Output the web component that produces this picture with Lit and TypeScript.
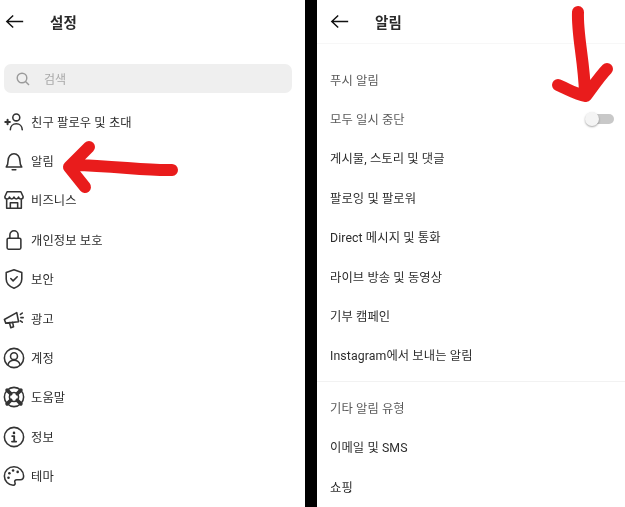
import { LitElement, html, css, svg } from "lit";
import { customElement } from "lit/decorators.js";

const back = html`<svg class="back" viewBox="0 0 22 16"><path d="M20 8H2M9 1.500 2 8l7 6.500"/></svg>`;

const icons: Record<string, unknown> = {
  invite: svg`<path d="M2.500 12h5M5 9.500v5" stroke-width="2.200"/><circle cx="14.500" cy="7" r="3.800"/><path d="M8 20.500c0-4 2.800-6.500 6.500-6.500s6.500 2.500 6.500 6.500"/>`,
  bell: svg`<path d="M3.500 18.500c1.500-1.500 2-3 2-6.500 0-4.500 2.800-8 6.500-8s6.500 3.500 6.500 8c0 3.500.5 5 2 6.500zM10 21.500h4"/>`,
  shop: svg`<path d="M4.500 3h15L22 8.500c0 3.200-4.300 3.200-5 .3-.8 2.700-4.200 2.700-5 0-.8 2.700-4.200 2.700-5 0-.7 2.900-5 2.900-5-.3zM4 12v9h16v-9M8 21v-6h8v6"/>`,
  lock: svg`<rect x="4.500" y="10" width="15" height="12" rx="1.500"/><path d="M7.500 10V6.500a4.500 4.500 0 0 1 9 0V10"/>`,
  shield: svg`<path d="M12 2 20.500 4.800v7.200c0 5-3.500 8.200-8.500 10C7 20.200 3.500 17 3.500 12V4.800z"/><path d="m8.500 11.500 2.500 2.500 4.500-4.500"/>`,
  ad: svg`<path d="M1.500 12.500 15 5l2 10-14 1.500zM7 16l1.500 5.500 3-1-1-5M19 7l2-1.500M19.500 10.500h2.500M19 14l2 1.500"/>`,
  account: svg`<circle cx="12" cy="12" r="10.500"/><circle cx="12" cy="10" r="3.800"/><path d="M5.500 19c1-3.500 3.800-4.500 6.500-4.500s5.500 1 6.500 4.500"/>`,
  help: svg`<circle cx="12" cy="12" r="10.500"/><circle cx="12" cy="12" r="5"/><path d="m4.500 4.500 4 4M19.500 4.500l-4 4M4.500 19.500l4-4M19.500 19.500l-4-4" stroke-width="4"/>`,
  info: svg`<circle cx="12" cy="12" r="10.500"/><path d="M10 11h2.200v6M9.800 17h4.600" stroke-width="2"/><circle cx="12" cy="7.500" r="1.400" fill="currentColor" stroke="none"/>`,
  theme: svg`<path d="M12 2C6 2 1.500 6.500 1.500 12s4.500 10 9.500 10c2.500 0 2.500-2 2-3-.7-1.500.3-3 2-3h4c2.500 0 3.500-1.500 3.500-4C22.500 6.500 17.500 2 12 2z"/><g fill="currentColor" stroke="none"><circle cx="7" cy="9" r="1.400"/><circle cx="11" cy="6" r="1.400"/><circle cx="16" cy="7.500" r="1.400"/><circle cx="6" cy="14" r="1.400"/></g>`,
};

const settings: [string, string][] = [
  ["invite", "친구 팔로우 및 초대"],
  ["bell", "알림"],
  ["shop", "비즈니스"],
  ["lock", "개인정보 보호"],
  ["shield", "보안"],
  ["ad", "광고"],
  ["account", "계정"],
  ["help", "도움말"],
  ["info", "정보"],
  ["theme", "테마"],
];

const firstGroup = ["게시물, 스토리 및 댓글", "팔로잉 및 팔로워", "Direct 메시지 및 통화", "라이브 방송 및 동영상", "기부 캠페인", "Instagram에서 보내는 알림"];
const secondGroup = ["이메일 및 SMS", "쇼핑"];

@customElement("app-root")
export class AppRoot extends LitElement {
  static styles = css`
    :host {
      display: block;
      width: 625px;
      height: 507px;
      overflow: hidden;
      position: relative;
      background: #fff;
      font-family: "Roboto", "Noto Sans CJK KR", sans-serif;
      color: #2c2c2c;
    }
    .screens { display: grid; grid-template-columns: 305px 12px 308px; height: 507px; filter: blur(0.6px); }
    .divider { background: #000; }
    .panel { min-width: 0; overflow: hidden; }
    .header { display: flex; align-items: center; height: 44px; padding-bottom: 1px; box-sizing: border-box; }
    .left .header { padding-left: 5px; }
    .right .header { padding-left: 13px; border-bottom: 1px solid #f7f7f7; }
    .back { width: 20px; height: 15px; fill: none; stroke: #111; stroke-width: 1.600; flex: none; }
    h1 { margin: 0; font-size: 14.500px; font-weight: 700; color: #2a2a2a; letter-spacing: 0.2px; }
    .left h1, .right h1 { margin-left: 25px; }
    .search {
      display: flex; align-items: center; gap: 14px;
      margin: 20px 13px 0 4px; height: 29px; padding-left: 12px;
      background: #efefef; border-radius: 7px;
      font-size: 12px; color: #a8a8a8;
    }
    .search svg { width: 14px; height: 14px; fill: none; stroke: #9a9a9a; stroke-width: 1.400; }
    .menu { margin-top: 9px; }
    .row { display: flex; align-items: center; height: 39.400px; font-size: 12.300px; letter-spacing: 0.1px; white-space: nowrap; }
    .menu .row { padding-left: 3px; gap: 6px; }
    .row svg { width: 22px; height: 22px; fill: none; stroke: #333; stroke-width: 1.700; flex: none; stroke-linejoin: round; stroke-linecap: round; }
    .list { padding: 16px 0 0 13px; }
    .row.between { justify-content: space-between; padding-right: 11px; }
    .muted { color: #5a5a5a; }
    .rule { height: 1px; background: #f2f2f2; margin: 6px 0 6px -13px; }
    .toggle { position: relative; width: 24px; height: 10px; border-radius: 5px; background: #c8c8c8; }
    .knob { position: absolute; left: -5px; top: -2px; width: 14px; height: 14px; border-radius: 50%; background: #f4f4f4; box-shadow: 0 1px 2px rgba(0,0,0,.35); }
    .marks { position: absolute; inset: 0; width: 625px; height: 507px; fill: none; stroke: #e91c1c; stroke-width: 12; stroke-linecap: round; stroke-linejoin: round; }
  `;

  render() {
    return html`
      <div class="screens">
        <section class="panel left">
          <div class="header">${back}<h1>설정</h1></div>
          <div class="search">
            <svg viewBox="0 0 14 14"><circle cx="6" cy="6" r="4.800"/><path d="m9.500 9.500 3.500 3.500"/></svg>
            <span>검색</span>
          </div>
          <div class="menu">
            ${settings.map(([icon, label]) => html`
              <div class="row"><svg viewBox="0 0 24 24">${icons[icon]}</svg><span>${label}</span></div>`)}
          </div>
        </section>
        <div class="divider"></div>
        <section class="panel right">
          <div class="header">${back}<h1>알림</h1></div>
          <div class="list">
            <div class="row muted">푸시 알림</div>
            <div class="row muted between"><span>모두 일시 중단</span><span class="toggle"><span class="knob"></span></span></div>
            ${firstGroup.map((t) => html`<div class="row">${t}</div>`)}
            <div class="rule"></div>
            <div class="row muted">기타 알림 유형</div>
            ${secondGroup.map((t) => html`<div class="row">${t}</div>`)}
          </div>
        </section>
      </div>
      <svg class="marks" viewBox="0 0 625 507">
        <path d="M172 170C150 171 115 166 74 165M89 147 69 167 85 187"/>
        <path d="M578 12C577 35 584 60 585 93M558 85C570 90 575 94 586 96 592 88 600 76 607 69"/>
      </svg>
    `;
  }
}
